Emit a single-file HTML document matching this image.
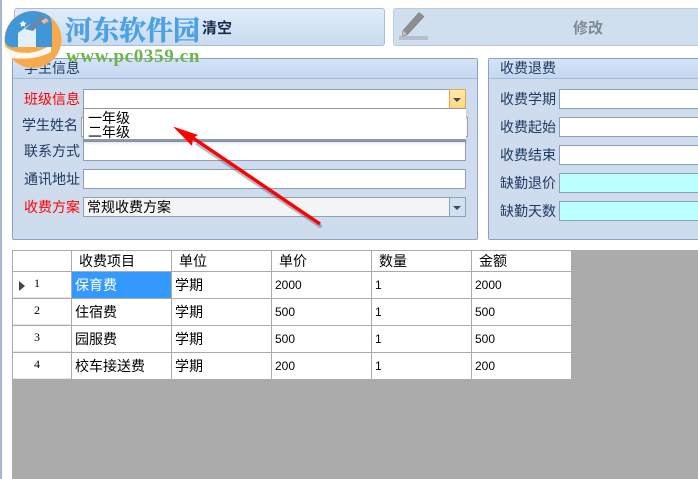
<!DOCTYPE html>
<html><head><meta charset="utf-8">
<style>
html,body{margin:0;padding:0;background:#fff}
#p{position:relative;width:698px;height:479px;overflow:hidden;background:#fff;font-family:"WenQuanYi Zen Hei","Noto Sans CJK SC",sans-serif;font-size:14px;color:#000}
#p div{position:absolute;box-sizing:border-box;white-space:nowrap}
.lb{color:#1f3a60;line-height:20px;height:20px;width:60px}
.red{color:#f00}
.in{background:#fff;border:1px solid #8ba0bd;height:20px}
.cy{background:#bcffff}
.gh{background:linear-gradient(#d4e3f6,#c5d8f1);border-bottom:1px solid #a5bad6;height:20px;left:0;top:0;right:0;color:#1f3a60;line-height:19px}
.cell{background:#fff;line-height:27px;padding-left:3px;height:26px;width:99px}
.n{font-family:"Liberation Sans",sans-serif;font-size:12px;padding-left:3px}
.hd{background:#fff;line-height:21px;height:20px;width:99px;top:251px;padding-left:7px}
.rh{left:13px;width:58px;height:26px;background:#fff;border-bottom:1px solid #e6e6e6;font:12px/22px "Liberation Serif",serif;padding-left:21px}
</style></head><body><div id="p">
<div style="left:0;top:0;width:2px;height:479px;background:#a3b6d4"></div>

<div style="left:14px;top:8px;width:371px;height:38px;border:1px solid #a9bdd6;border-radius:3px;background:linear-gradient(#e0ecfa,#c9dbef)"></div>
<div style="left:202px;top:19px;font-size:15px;line-height:18px;color:#15294a;font-weight:bold">清空</div>
<div style="left:393px;top:8px;width:320px;height:38px;border:1px solid #b9cbdf;border-radius:3px;background:#d0dfee"></div>
<svg style="position:absolute;left:393px;top:8px" width="40" height="38" viewBox="0 0 40 38"><rect x="6" y="28" width="29" height="4" fill="#b4bfca"/><path d="M26 4.500l5 4L14 27l-5 1.500 1-6z" fill="#8e8e8e" stroke="#7d7d7d" stroke-width=".6"/><path d="M10.500 22.500l3.500 4-5 2z" fill="#c4c0b6"/></svg>
<div style="left:573px;top:19px;font-size:15px;line-height:18px;color:#7f8a96;font-weight:bold">修改</div>

<div style="left:12px;top:58px;width:466px;height:182px;border:1px solid #8ba3c3;border-radius:2px;background:#cedcee">
<div class="gh" style="padding-left:11px;font-size:14px">学生信息</div></div>
<div style="left:488px;top:58px;width:230px;height:182px;border:1px solid #8ba3c3;border-radius:2px;background:#cedcee">
<div class="gh" style="padding-left:11px">收费退费</div></div>

<div class="lb red" style="left:24px;top:89px">班级信息</div>
<div class="lb" style="left:22px;top:115px">学生姓名</div>
<div class="lb" style="left:24px;top:141px">联系方式</div>
<div class="lb" style="left:24px;top:169px">通讯地址</div>
<div class="lb red" style="left:24px;top:197px">收费方案</div>

<div class="in" style="left:83px;top:89px;width:383px"></div>
<div style="left:449px;top:89px;width:17px;height:20px;background:linear-gradient(#ffe9a8,#ffd97c);border:1px solid #e0a94c"></div>
<div style="left:453px;top:98px;width:0;height:0;border:4px solid transparent;border-top:4px solid #3b4a66;border-bottom:0"></div>
<div class="in" style="left:81px;top:117px;width:387px;height:20px;border-color:#a8a8a8"></div>
<div class="in" style="left:83px;top:141px;width:383px"></div>
<div class="in" style="left:83px;top:169px;width:383px"></div>
<div class="in" style="left:83px;top:197px;width:383px;background:#f4f4f4;line-height:18px;padding-left:3px">常规收费方案</div>
<div style="left:449px;top:197px;width:17px;height:20px;background:#d3e0f0;border:1px solid #8ba0bd"></div>
<div style="left:453px;top:206px;width:0;height:0;border:4px solid transparent;border-top:4px solid #3b4a66;border-bottom:0"></div>

<div style="left:83px;top:108px;width:383px;height:33px;background:#fff;border:1px solid #8d98a8;border-width:1px 0 2px 1px;box-shadow:0 2px 3px rgba(0,0,0,.12)">
<div style="left:4px;top:2px;line-height:14px">一年级</div>
<div style="left:4px;top:16px;line-height:14px">二年级</div></div>

<div class="lb" style="left:500px;top:89px">收费学期</div>
<div class="lb" style="left:500px;top:117px">收费起始</div>
<div class="lb" style="left:500px;top:145px">收费结束</div>
<div class="lb" style="left:500px;top:173px">缺勤退价</div>
<div class="lb" style="left:500px;top:201px">缺勤天数</div>
<div class="in" style="left:559px;top:89px;width:150px"></div>
<div class="in" style="left:559px;top:117px;width:150px"></div>
<div class="in" style="left:559px;top:145px;width:150px"></div>
<div class="in cy" style="left:559px;top:173px;width:150px"></div>
<div class="in cy" style="left:559px;top:201px;width:150px"></div>

<div style="left:12px;top:250px;width:686px;height:229px;background:#ababab"></div>
<div style="left:13px;top:251px;width:58px;height:20px;background:#fff"></div>
<div class="hd" style="left:72px">收费项目</div><div class="hd" style="left:172px">单位</div><div class="hd" style="left:272px">单价</div><div class="hd" style="left:372px">数量</div><div class="hd" style="left:472px">金额</div>

<div class="rh" style="top:272px">1</div><div class="rh" style="top:299px">2</div><div class="rh" style="top:326px">3</div><div class="rh" style="top:353px">4</div>
<div style="left:19px;top:281px;width:0;height:0;border:5px solid transparent;border-left:6px solid #444;border-right:0"></div>

<div class="cell" style="left:72px;top:272px;background:#3399ff;color:#fff">保育费</div>
<div class="cell" style="left:172px;top:272px">学期</div><div class="cell n" style="left:272px;top:272px">2000</div><div class="cell n" style="left:372px;top:272px">1</div><div class="cell n" style="left:472px;top:272px">2000</div>
<div class="cell" style="left:72px;top:299px">住宿费</div>
<div class="cell" style="left:172px;top:299px">学期</div><div class="cell n" style="left:272px;top:299px">500</div><div class="cell n" style="left:372px;top:299px">1</div><div class="cell n" style="left:472px;top:299px">500</div>
<div class="cell" style="left:72px;top:326px">园服费</div>
<div class="cell" style="left:172px;top:326px">学期</div><div class="cell n" style="left:272px;top:326px">500</div><div class="cell n" style="left:372px;top:326px">1</div><div class="cell n" style="left:472px;top:326px">500</div>
<div class="cell" style="left:72px;top:353px">校车接送费</div>
<div class="cell" style="left:172px;top:353px">学期</div><div class="cell n" style="left:272px;top:353px">200</div><div class="cell n" style="left:372px;top:353px">1</div><div class="cell n" style="left:472px;top:353px">200</div>

<svg style="position:absolute;left:160px;top:115px" width="180" height="125" viewBox="0 0 180 125">
<path d="M35 26L160 110" stroke="#4a5a70" stroke-opacity=".4" stroke-width="4" transform="translate(1.500 2)"/>
<path d="M33 23L160 109" stroke="#f00" stroke-width="3.400"/>
<path d="M13 11.500L38 20l-5 3 -1 8z" fill="#f00"/>
</svg>

<svg style="position:absolute;left:0;top:0" width="70" height="72" viewBox="0 0 70 72">
<circle cx="33" cy="39.500" r="28.500" fill="#f6aa4c"/>
<path d="M5 42A28.500 28.500 0 0 1 50 16.500L52 24V47H18c-5 0-9 2-13-5z" fill="#3f97d8"/>
<path d="M3 44c8 10 28 12 42 4l6-2v6c-9 5-20 7-30 6.500-6 0-9 0-11-1.500C6 54 4 49 3 44z" fill="#fff" opacity=".92"/>
<path d="M18 47V33l12-9 6 5v18z" fill="#fff" opacity=".85"/>
<path d="M25 29L41 14l8 7-3 3-9 3-4 4z" fill="#5f8cb3"/>
<path d="M41 21l5-3 3 3-5 3z" fill="#e9b4a4"/>
<path d="M37 32h15v15H37z" fill="#3f97d8"/>
<path d="M23 20.500l1.200 2 2.300.4-1.600 1.600.4 2.300-2.300-1.100-2.300 1.100.4-2.300-1.600-1.600 2.300-.4z" fill="#fff"/>
</svg>
<div style="left:65px;top:13px;font:bold 27px/32px 'Noto Serif CJK SC',serif;color:#4aa1e6;-webkit-text-stroke:.5px #4aa1e6">河东软件园</div>
<div style="left:66px;top:47px;font:bold 19px/20px 'Liberation Serif',serif;color:#6bb54a;letter-spacing:.65px">www.pc0359.cn</div>
</div></body></html>
